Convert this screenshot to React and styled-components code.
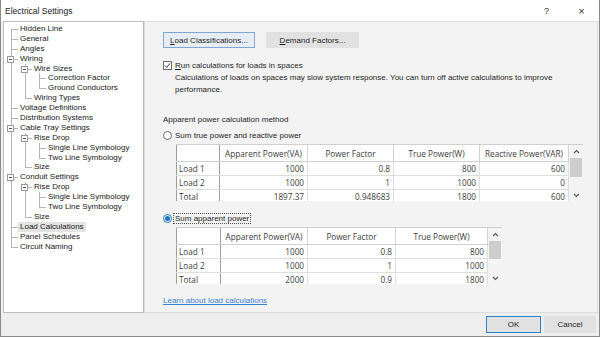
import React from 'react'
import styled, { createGlobalStyle } from 'styled-components'

const GlobalStyle = createGlobalStyle`
  html, body { margin: 0; padding: 0; background: #fff; }
  body { font-family: "Liberation Sans", Arial, sans-serif; }
`

const Window = styled.div`
  width: 600px;
  height: 337px;
  box-sizing: border-box;
  border: 1px solid #8a8a8a;
  border-top: none;
  display: flex;
  flex-direction: column;
  background: #f0f0f0;
  font-family: "Liberation Sans", Arial, sans-serif;
  font-size: 8px;
  color: #1e1e1e;
  overflow: hidden;
`

const TitleBar = styled.div`
  height: 21px;
  flex: none;
  background: #fff;
  display: flex;
  align-items: center;
  padding-left: 4px;
  font-size: 8.5px;
  color: #222;
`

const Title = styled.div`
  flex: 1;
`

const TitleButton = styled.div`
  width: 35px;
  text-align: center;
  font-size: ${p => p.$size || 9}px;
  color: #333;
`

const Main = styled.div`
  height: 292px;
  flex: none;
  display: flex;
  padding-left: 2px;
`

const Tree = styled.div`
  width: 141px;
  flex: none;
  box-sizing: border-box;
  border: 1px solid #bdbdbd;
  background: #fff;
  padding-top: 2px;
`

const TreeRow = styled.div`
  display: flex;
  height: 9.9px;
`

const Guide = styled.div`
  position: relative;
  width: 14px;
  flex: none;
  &::before {
    content: '';
    display: ${p => (p.$kind === 'none' ? 'none' : 'block')};
    position: absolute;
    left: 7px;
    width: 1px;
    top: ${p => (p.$kind === 'first' ? '50%' : '0')};
    bottom: ${p => (p.$kind === 'elbow' ? '50%' : '0')};
    background: #b5b5b5;
  }
  &::after {
    content: '';
    display: ${p => (p.$kind === 'pipe' || p.$kind === 'none' ? 'none' : 'block')};
    position: absolute;
    left: 7px;
    right: 0;
    top: 50%;
    height: 1px;
    background: #b5b5b5;
  }
`

const Expander = styled.div`
  position: absolute;
  z-index: 1;
  left: 3px;
  top: 50%;
  width: 7px;
  height: 7px;
  margin-top: -3px;
  box-sizing: border-box;
  border: 1px solid #9a9a9a;
  background: #fff;
  &::after {
    content: '';
    position: absolute;
    left: 1px;
    right: 1px;
    top: 2px;
    height: 1px;
    background: #555;
  }
`

const TreeLabel = styled.div`
  padding: 0 2px;
  line-height: 9.9px;
  white-space: nowrap;
  color: #202020;
  background: ${p => (p.$selected ? '#e3e3e3' : 'transparent')};
`

const Content = styled.div`
  flex: 1;
  margin-right: 1px;
  box-sizing: border-box;
  border: 1px solid #dcdcdc;
  background: #f3f3f3;
  padding: 10px 0 0 18px;
  display: flex;
  flex-direction: column;
  align-items: flex-start;
`

const ButtonRow = styled.div`
  display: flex;
  gap: 11px;
`

const Button = styled.div`
  width: ${p => p.$w}px;
  height: ${p => p.$h || 16}px;
  box-sizing: border-box;
  display: flex;
  align-items: center;
  justify-content: center;
  font-size: 8px;
  color: #1e1e1e;
  background: ${p => (p.$focus ? '#e6edf5' : '#e1e1e1')};
  border: 1px solid ${p => (p.$focus ? '#7ea6d3' : p.$default ? '#2f7fd0' : '#e1e1e1')};
  u { text-decoration: underline; }
`

const CheckRow = styled.div`
  display: flex;
  align-items: center;
  gap: ${p => p.$gap || 3}px;
  height: 10px;
  margin-top: ${p => p.$mt}px;
`

const Description = styled.div`
  margin: 2px 0 0 12px;
  line-height: 12px;
  width: 385px;
  color: #1e1e1e;
`

const SectionLabel = styled.div`
  margin-top: 18px;
  line-height: 12px;
`

const RadioCircle = styled.div`
  width: 9px;
  height: 9px;
  box-sizing: border-box;
  border-radius: 50%;
  border: 1px solid ${p => (p.$on ? '#1a73c8' : '#6d6d6d')};
  background: #fff;
  display: flex;
  align-items: center;
  justify-content: center;
  &::after {
    content: '';
    display: ${p => (p.$on ? 'block' : 'none')};
    width: 5px;
    height: 5px;
    border-radius: 50%;
    background: #1a73c8;
  }
`

const FocusLabel = styled.span`
  outline: ${p => (p.$focus ? '1px dotted #555' : 'none')};
  outline-offset: 0;
  padding: 0 1px;
`

const GridWrap = styled.div`
  display: flex;
  margin: 4px 0 0 13px;
  height: 57px;
  overflow: hidden;
  background: #fff;
  border-top: 1px solid #cfcfcf;
  box-sizing: border-box;
`

const Table = styled.table`
  border-collapse: collapse;
  table-layout: fixed;
  font-family: "Open Sans", "Noto Sans", sans-serif;
  font-size: 8.2px;
  color: #3c3c3c;
  align-self: flex-start;
`

const HeadCell = styled.th`
  height: 16px;
  padding: 0;
  font-weight: normal;
  text-align: center;
  border: 1px solid #d2d2d2;
  border-top: none;
  white-space: nowrap;
  overflow: hidden;
`

const Cell = styled.td`
  height: 13px;
  padding: 0 3px 0 0;
  text-align: right;
  border: 1px solid #dedede;
  line-height: 13px;
  white-space: nowrap;
`

const RowHead = styled.td`
  height: 13px;
  padding: 0 0 0 2px;
  text-align: left;
  line-height: 13px;
  border: 1px solid #dedede;
  border-left: 1px solid #9d9d9d;
  border-right: 1px solid #9d9d9d;
`

const Corner = styled.th`
  border: 1px solid #d2d2d2;
  border-top: none;
  border-left: 1px solid #9d9d9d;
  border-right: 1px solid #9d9d9d;
`

const ScrollBar = styled.div`
  width: 14px;
  flex: none;
  background: #f4f4f4;
  display: flex;
  flex-direction: column;
  align-items: center;
`

const ScrollArrow = styled.div`
  height: ${p => p.$h}px;
  display: flex;
  align-items: center;
  justify-content: center;
  width: 100%;
`

const Thumb = styled.div`
  width: 12px;
  height: ${p => p.$h}px;
  background: #cdcdcd;
`

const Link = styled.div`
  margin-top: 11px;
  line-height: 12px;
  color: #3b7fcf;
  text-decoration: underline;
`

const Footer = styled.div`
  flex: 1;
  display: flex;
  align-items: center;
  justify-content: flex-end;
  gap: 3px;
  padding-right: 3px;
  background: #eeeeee;
`

const tree = [
  { label: 'Hidden Line' },
  { label: 'General' },
  { label: 'Angles' },
  {
    label: 'Wiring',
    children: [
      { label: 'Wire Sizes', children: [{ label: 'Correction Factor' }, { label: 'Ground Conductors' }] },
      { label: 'Wiring Types' },
    ],
  },
  { label: 'Voltage Definitions' },
  { label: 'Distribution Systems' },
  {
    label: 'Cable Tray Settings',
    children: [
      { label: 'Rise Drop', children: [{ label: 'Single Line Symbology' }, { label: 'Two Line Symbology' }] },
      { label: 'Size' },
    ],
  },
  {
    label: 'Conduit Settings',
    children: [
      { label: 'Rise Drop', children: [{ label: 'Single Line Symbology' }, { label: 'Two Line Symbology' }] },
      { label: 'Size' },
    ],
  },
  { label: 'Load Calculations', selected: true },
  { label: 'Panel Schedules' },
  { label: 'Circuit Naming' },
]

function flatten(nodes, trail = [], out = []) {
  nodes.forEach((n, i) => {
    const last = i === nodes.length - 1
    let own = last ? 'elbow' : 'tee'
    if (trail.length === 0 && i === 0) own = 'first'
    out.push({
      label: n.label,
      selected: n.selected,
      hasChildren: !!n.children,
      guides: [...trail.map(l => (l ? 'none' : 'pipe')), own],
    })
    if (n.children) flatten(n.children, [...trail, last], out)
  })
  return out
}

const rows = flatten(tree)

const Chevron = ({ up }) => (
  <svg width="7" height="5" viewBox="0 0 7 5">
    <polyline
      points={up ? '1,4 3.5,1.5 6,4' : '1,1 3.5,3.5 6,1'}
      fill="none"
      stroke="#555"
      strokeWidth="1.1"
    />
  </svg>
)

const CheckBox = () => (
  <svg width="9" height="9" viewBox="0 0 9 9">
    <rect x="0.5" y="0.5" width="8" height="8" fill="#fff" stroke="#6d6d6d" />
    <polyline points="2,4.6 3.7,6.4 7,2.4" fill="none" stroke="#333" strokeWidth="1" />
  </svg>
)

const DataGrid = ({ cols, widths, data, thumb }) => (
  <GridWrap>
    <Table style={{ width: widths.reduce((a, b) => a + b, 0) }}>
      <colgroup>
        {widths.map((w, i) => (
          <col key={i} style={{ width: w }} />
        ))}
      </colgroup>
      <thead>
        <tr>
          <Corner />
          {cols.map(c => (
            <HeadCell key={c}>{c}</HeadCell>
          ))}
        </tr>
      </thead>
      <tbody>
        {data.map(r => (
          <tr key={r[0]}>
            <RowHead>{r[0]}</RowHead>
            {r.slice(1).map((v, i) => (
              <Cell key={i}>{v}</Cell>
            ))}
          </tr>
        ))}
      </tbody>
    </Table>
    <ScrollBar>
      <ScrollArrow $h={13}>
        <Chevron up />
      </ScrollArrow>
      <Thumb $h={thumb} />
      <div style={{ flex: 1 }} />
      <ScrollArrow $h={12}>
        <Chevron />
      </ScrollArrow>
    </ScrollBar>
  </GridWrap>
)

export default function App() {
  return (
    <>
      <GlobalStyle />
      <Window>
        <TitleBar>
          <Title>Electrical Settings</Title>
          <TitleButton>?</TitleButton>
          <TitleButton $size={11}>×</TitleButton>
        </TitleBar>
        <Main>
          <Tree>
            {rows.map((r, i) => (
              <TreeRow key={i}>
                {r.guides.map((g, j) => (
                  <Guide key={j} $kind={g}>
                    {j === r.guides.length - 1 && r.hasChildren && <Expander />}
                  </Guide>
                ))}
                <TreeLabel $selected={r.selected}>{r.label}</TreeLabel>
              </TreeRow>
            ))}
          </Tree>
          <Content>
            <ButtonRow>
              <Button $w={92} $focus>
                <span>
                  <u>L</u>oad Classifications...
                </span>
              </Button>
              <Button $w={93}>
                <span>
                  <u>D</u>emand Factors...
                </span>
              </Button>
            </ButtonRow>
            <CheckRow $mt={12}>
              <CheckBox />
              <span>
                <u>R</u>un calculations for loads in spaces
              </span>
            </CheckRow>
            <Description>
              Calculations of loads on spaces may slow system response. You can turn off active calculations to improve
              performance.
            </Description>
            <SectionLabel>Apparent power calculation method</SectionLabel>
            <CheckRow $mt={4} $gap={2}>
              <RadioCircle />
              <FocusLabel>Sum true power and reactive power</FocusLabel>
            </CheckRow>
            <DataGrid
              cols={['Apparent Power(VA)', 'Power Factor', 'True Power(W)', 'Reactive Power(VAR)']}
              widths={[43, 88, 86, 86, 89]}
              thumb={19}
              data={[
                ['Load 1', '1000', '0.8', '800', '600'],
                ['Load 2', '1000', '1', '1000', '0'],
                ['Total', '1897.37', '0.948683', '1800', '600'],
              ]}
            />
            <CheckRow $mt={12} $gap={2}>
              <RadioCircle $on />
              <FocusLabel $focus>Sum apparent power</FocusLabel>
            </CheckRow>
            <DataGrid
              cols={['Apparent Power(VA)', 'Power Factor', 'True Power(W)']}
              widths={[44, 87, 88, 92]}
              thumb={18}
              data={[
                ['Load 1', '1000', '0.8', '800'],
                ['Load 2', '1000', '1', '1000'],
                ['Total', '2000', '0.9', '1800'],
              ]}
            />
            <Link>Learn about load calculations</Link>
          </Content>
        </Main>
        <Footer>
          <Button $w={55} $h={17} $default>
            OK
          </Button>
          <Button $w={52} $h={17}>
            Cancel
          </Button>
        </Footer>
      </Window>
    </>
  )
}
